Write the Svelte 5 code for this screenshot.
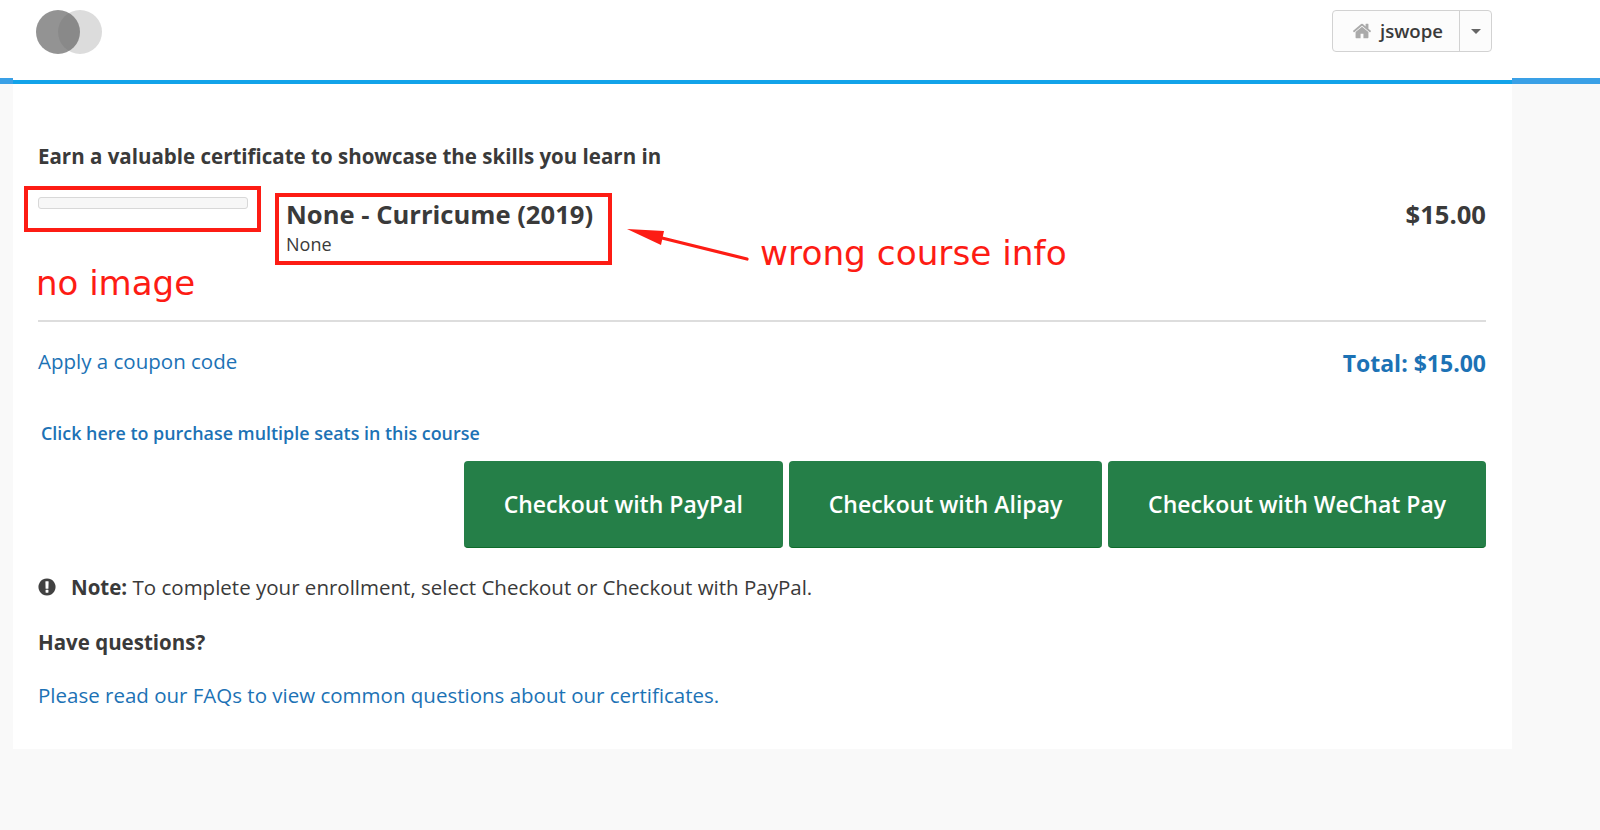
<script>
  const buttons = ['Checkout with PayPal', 'Checkout with Alipay', 'Checkout with WeChat Pay'];
</script>

<div class="page">
  <header class="topbar">
    <div class="logo">
      <span class="circle light"></span>
      <span class="circle dark"></span>
    </div>
    <div class="user-menu">
      <div class="user-name">
        <svg class="home" viewBox="0 0 1792 1792" aria-hidden="true">
          <path d="M1472 992v480q0 26-19 45t-45 19h-384v-384h-256v384h-384q-26 0-45-19t-19-45v-480q0-1 .5-3t.5-3l575-474 575 474q1 2 1 6zm223-69l-62 74q-8 9-21 11h-3q-13 0-21-7l-692-577-692 577q-12 8-24 7-13-2-21-11l-62-74q-8-10-7-23.5t11-21.5l719-599q32-26 76-26t76 26l244 204v-195q0-14 9-23t23-9h192q14 0 23 9t9 23v408l219 182q10 8 11 21.5t-7 23.5z" />
        </svg>
        <span>jswope</span>
      </div>
      <div class="user-toggle"><span class="caret"></span></div>
    </div>
  </header>

  <div class="rule">
    <span class="rule-side left"></span>
    <span class="rule-mid"></span>
    <span class="rule-side right"></span>
  </div>

  <main class="content">
    <h2 class="lead">Earn a valuable certificate to showcase the skills you learn in</h2>

    <div class="course">
      <div class="thumb"></div>
      <div class="course-info">
        <div class="course-title">None - Curricume (2019)</div>
        <div class="course-sub">None</div>
      </div>
      <div class="price">$15.00</div>
    </div>

    <hr />

    <div class="totals">
      <a href="#coupon" class="coupon">Apply a coupon code</a>
      <div class="total">Total: $15.00</div>
    </div>

    <a href="#seats" class="seats">Click here to purchase multiple seats in this course</a>

    <div class="actions">
      {#each buttons as label}
        <button type="button" class="checkout">{label}</button>
      {/each}
    </div>

    <p class="note">
      <svg class="alert" viewBox="0 0 1792 1792" aria-hidden="true">
        <path d="M896 128q209 0 385.5 103t279.5 279.5 103 385.5-103 385.5-279.5 279.5-385.5 103-385.5-103-279.5-279.5-103-385.5 103-385.5 279.5-279.5 385.5-103zm128 1247v-190q0-14-9-23.5t-22-9.5h-192q-13 0-23 10t-10 23v190q0 13 10 23t23 10h192q13 0 22-9.5t9-23.5zm-2-344l18-621q0-12-10-18-10-8-24-8h-220q-14 0-24 8-10 6-10 18l17 621q0 10 10 17.5t24 7.5h185q14 0 23.5-7.5t11.5-17.5z" />
      </svg>
      <span><b>Note:</b> To complete your enrollment, select Checkout or Checkout with PayPal.</span>
    </p>

    <p class="questions">Have questions?</p>

    <a href="#faq" class="faq">Please read our FAQs to view common questions about our certificates.</a>
  </main>

  <!-- annotations drawn over the screenshot -->
  <div class="mark mark-image"></div>
  <div class="mark mark-course"></div>
  <div class="mark-text text-image">no image</div>
  <div class="mark-text text-course">wrong course info</div>
  <svg class="arrow" width="140" height="50" viewBox="620 220 140 50" aria-hidden="true">
    <line x1="662" y1="238" x2="747" y2="259" stroke="#fd1c14" stroke-width="3.2" stroke-linecap="round" />
    <polygon points="627,229 664,231 661,245" fill="#fd1c14" />
  </svg>
</div>

<style>
  :global(body) {
    margin: 0;
    background: #f9f9f9;
  }

  .page {
    position: relative;
    min-height: 830px;
    background: #f9f9f9;
    font-family: 'Open Sans', 'Liberation Sans', sans-serif;
    color: #3a3a3a;
  }

  .topbar {
    height: 78px;
    background: #fff;
    display: flex;
    justify-content: space-between;
    align-items: flex-start;
    padding: 10px 108px 0 36px;
    box-sizing: border-box;
  }

  .logo {
    display: flex;
  }

  .circle {
    width: 44px;
    height: 44px;
    border-radius: 50%;
  }

  .circle.dark {
    background: rgba(105, 105, 105, 0.72);
    margin-left: -66px;
  }

  .circle.light {
    background: #dcdcdc;
    margin-left: 22px;
  }

  .user-menu {
    display: flex;
    width: 160px;
    height: 42px;
    box-sizing: border-box;
    border: 1px solid #d2d2d2;
    border-radius: 4px;
    background: #fcfcfc;
  }

  .user-name {
    width: 127px;
    display: flex;
    align-items: center;
    justify-content: flex-end;
    gap: 8px;
    padding-right: 16px;
    box-sizing: border-box;
    border-right: 1px solid #d2d2d2;
    font-size: 18.6px;
    font-weight: 600;
    line-height: 38px;
    color: #3a3a3a;
  }

  .home {
    width: 20px;
    height: 20px;
    fill: #aaa;
  }

  .user-toggle {
    flex: 1;
    display: flex;
    align-items: center;
    justify-content: center;
  }

  .caret {
    width: 0;
    height: 0;
    border-left: 5px solid transparent;
    border-right: 5px solid transparent;
    border-top: 5px solid #666;
  }

  .rule {
    height: 6px;
    display: flex;
    align-items: flex-end;
    background: #fff;
  }

  .rule-side {
    height: 6px;
    background: #3aa0e6;
  }

  .rule-side.left {
    width: 13px;
  }

  .rule-side.right {
    width: 88px;
  }

  .rule-mid {
    flex: 1;
    height: 4px;
    background: #12a3e9;
  }

  .content {
    width: 1499px;
    margin-left: 13px;
    box-sizing: border-box;
    padding: 57px 26px 41px 25px;
    background: #fff;
  }

  .lead {
    margin: 0 0 26px;
    font-size: 20.5px;
    line-height: 30px;
    font-weight: 700;
  }

  .course {
    display: flex;
    align-items: flex-start;
    height: 60px;
  }

  .thumb {
    width: 210px;
    height: 12px;
    box-sizing: border-box;
    margin-right: 38px;
    background: #f7f7f7;
    border: 1px solid #d8d8d8;
    border-radius: 3px;
  }

  .course-info {
    flex: 1;
  }

  .course-title {
    padding-top: 1px;
    font-size: 25.6px;
    line-height: 33px;
    font-weight: 700;
  }

  .course-sub {
    font-size: 18px;
    line-height: 26px;
  }

  .price {
    padding-top: 1px;
    font-size: 25.6px;
    line-height: 33px;
    font-weight: 700;
  }

  hr {
    margin: 63px 0 25px;
    height: 2px;
    border: 0;
    background: #ddd;
  }

  .totals {
    display: flex;
    justify-content: space-between;
    align-items: flex-start;
    height: 33px;
  }

  a {
    color: #1c72b5;
    text-decoration: none;
  }

  .coupon {
    font-size: 20.5px;
    line-height: 28px;
  }

  .total {
    font-size: 23px;
    line-height: 32px;
    font-weight: 700;
    color: #1c72b5;
  }

  .seats {
    display: block;
    margin: 41px 0 16px 3px;
    font-size: 17.9px;
    line-height: 24px;
    font-weight: 600;
  }

  .actions {
    display: flex;
    justify-content: flex-end;
    gap: 6px;
  }

  .checkout {
    height: 87px;
    padding: 0 39.9px;
    border: 0;
    border-bottom: 1px solid #0e6b2a;
    border-radius: 4px;
    background: #257f48;
    color: #fff;
    font-family: inherit;
    font-size: 23px;
    font-weight: 600;
  }

  .note {
    margin: 26px 0 0 -1px;
    display: flex;
    align-items: center;
    gap: 14px;
    font-size: 20.5px;
    line-height: 26px;
  }

  .alert {
    width: 20px;
    height: 20px;
    fill: #414141;
  }

  .questions {
    margin: 29px 0 27px;
    font-size: 20.5px;
    line-height: 26px;
    font-weight: 700;
  }

  .faq {
    display: block;
    font-size: 20.5px;
    line-height: 26px;
  }

  .mark {
    position: absolute;
    box-sizing: border-box;
    border: 4px solid #fd1c14;
  }

  .mark-image {
    left: 24px;
    top: 186px;
    width: 237px;
    height: 46px;
  }

  .mark-course {
    left: 275px;
    top: 193px;
    width: 337px;
    height: 72px;
  }

  .mark-text {
    position: absolute;
    font-family: 'DejaVu Sans', sans-serif;
    font-size: 34px;
    line-height: 40px;
    color: #fd1c14;
    white-space: nowrap;
  }

  .text-image {
    left: 36px;
    top: 263px;
  }

  .text-course {
    left: 760px;
    top: 233px;
    font-size: 34.3px;
  }

  .arrow {
    position: absolute;
    left: 620px;
    top: 220px;
  }
</style>
